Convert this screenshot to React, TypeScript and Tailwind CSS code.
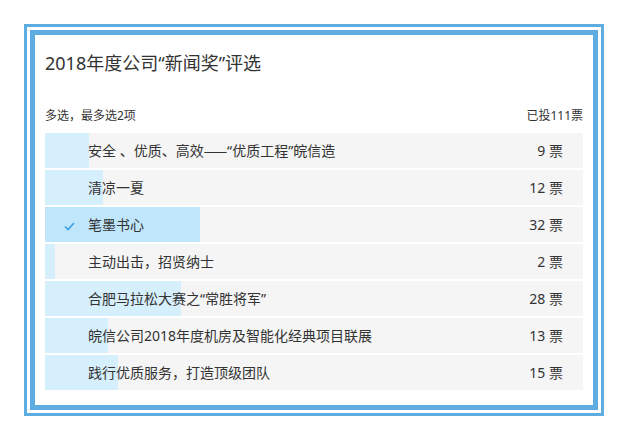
import React from "react";

const cjk = { fontFamily: '"Noto Sans CJK SC", sans-serif' };

const items: { name: React.ReactNode; key: string; votes: number; checked?: boolean }[] = [
  {
    key: "a",
    name: (
      <>
        安全 、优质、高效<span style={cjk}>——</span>“优质工程”皖信造
      </>
    ),
    votes: 9,
  },
  { key: "b", name: "清凉一夏", votes: 12 },
  { key: "c", name: "笔墨书心", votes: 32, checked: true },
  { key: "d", name: "主动出击，招贤纳士", votes: 2 },
  { key: "e", name: "合肥马拉松大赛之“常胜将军”", votes: 28 },
  { key: "f", name: "皖信公司2018年度机房及智能化经典项目联展", votes: 13 },
  { key: "g", name: "践行优质服务，打造顶级团队", votes: 15 },
];

const total = 111;

export default function App() {
  return (
    <div
      className="w-[628px] h-[441px] bg-white pl-[24px] pt-[24px]"
      style={{ fontFamily: '"Noto Sans", "Noto Sans CJK SC", sans-serif' }}
    >
      <div className="w-[580px] h-[392px] border-[3px] border-[#5dade2] p-[3px]">
        <div className="h-full border-[5px] border-[#5dade2] bg-white px-[10px] pt-[15px]">
          <div className="text-[18px] leading-[26px] text-[#333]">2018年度公司“新闻奖”评选</div>
          <div className="mt-[31px] flex justify-between text-[12px] leading-[18px] text-[#333]">
            <span>多选，最多选2项</span>
            <span>已投111票</span>
          </div>
          <div className="mt-[8px] flex flex-col gap-[2px]">
            {items.map((it) => (
              <div key={it.key} className="relative h-[35px] bg-[#f5f5f5]">
                <div
                  className={it.checked ? "absolute left-0 top-0 h-full bg-[#bfe6fb]" : "absolute left-0 top-0 h-full bg-[#d6effc]"}
                  style={{ width: `${(it.votes / total) * 100}%` }}
                />
                <div className="relative flex h-full items-center justify-between pl-[43px] pr-[20px] text-[14px] text-[#333]">
                  {it.checked && (
                    <svg
                      className="absolute left-[19px] top-[15px]"
                      width="11"
                      height="9"
                      viewBox="0 0 11 9"
                      fill="none"
                    >
                      <path d="M1 4.5 L4 7.5 L10 1" stroke="#3d9fe0" strokeWidth="1.6" />
                    </svg>
                  )}
                  <span>{it.name}</span>
                  <span>{it.votes} 票</span>
                </div>
              </div>
            ))}
          </div>
        </div>
      </div>
    </div>
  );
}
